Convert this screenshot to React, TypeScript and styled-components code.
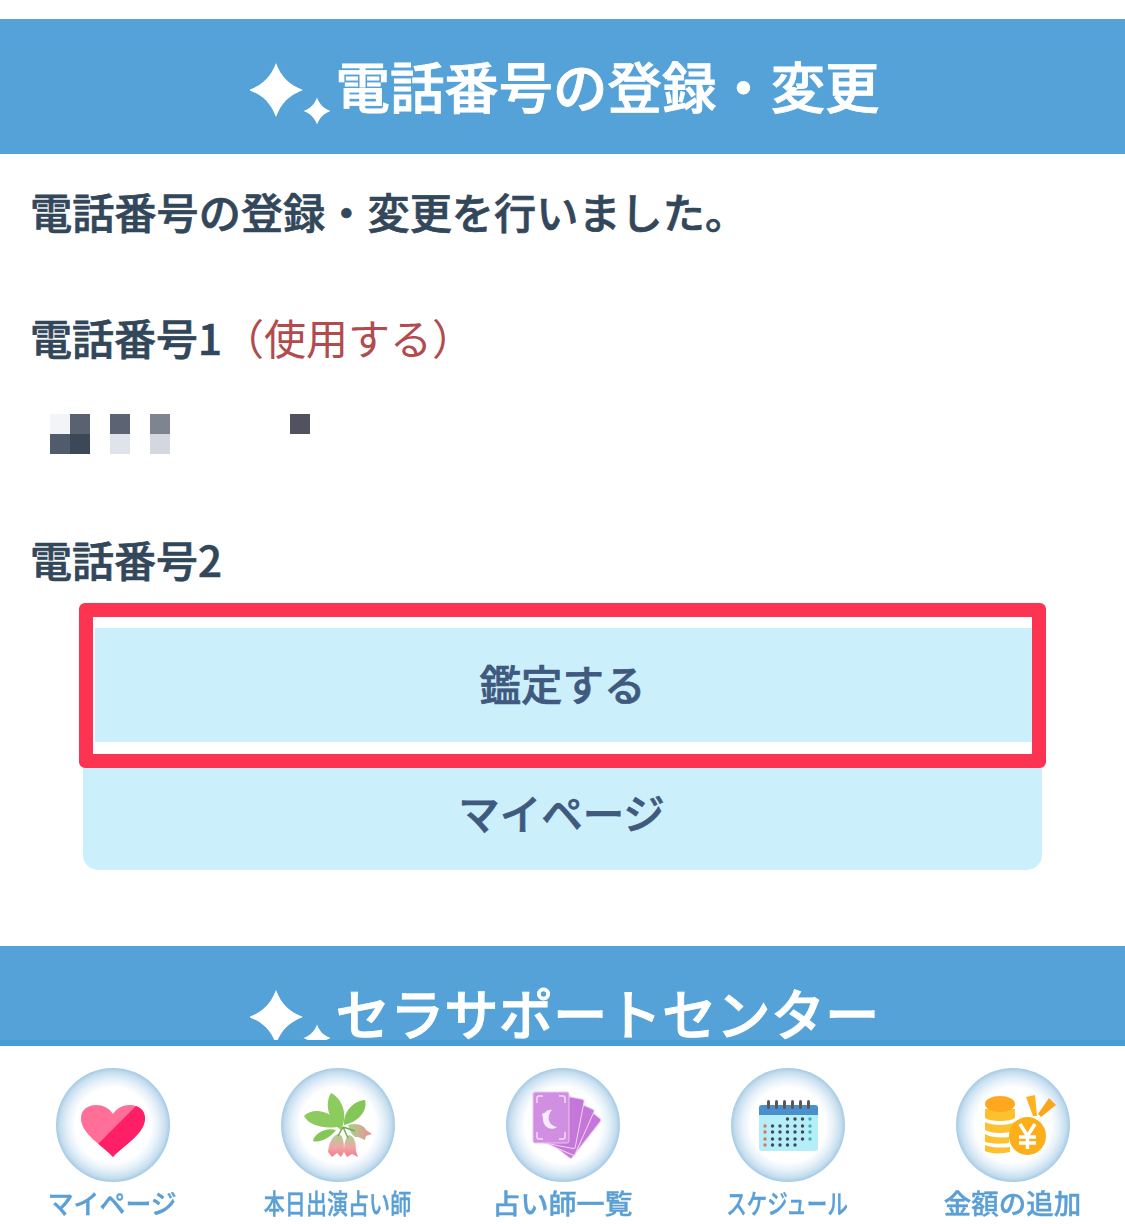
import * as React from "react";
import styled, { createGlobalStyle } from "styled-components";

const GlobalStyle = createGlobalStyle`
  html, body {
    margin: 0;
    padding: 0;
    background: #fff;
    font-family: "Noto Sans CJK JP", "Noto Sans", sans-serif;
  }
  * { box-sizing: border-box; }
`;

const Page = styled.div`
  width: 1125px;
  height: 1224px;
  display: flex;
  flex-direction: column;
  overflow: hidden;
  background: #fff;
`;

const Main = styled.main`
  height: 1040px;
  flex: none;
  overflow: hidden;
  padding-top: 19px;
`;

const Band = styled.section<{ $gap?: number }>`
  height: 135px;
  margin-top: ${p => p.$gap || 0}px;
  padding-left: 4px;
  background: #54a2d8;
  display: flex;
  justify-content: center;
  align-items: center;
  gap: 6px;
`;

const BandTitle = styled.h2`
  margin: 0 0 4px;
  color: #fff;
  font-size: 54.4px;
  font-weight: 500;
  -webkit-text-stroke: 0.9px currentColor;
  line-height: 70px;
  white-space: nowrap;
`;

const SparkleIcon = styled.svg`
  width: 80px;
  height: 61px;
  margin-top: 14px;
  flex: none;
  filter: blur(0.7px);
`;

const Content = styled.div`
  padding: 27px 32px 0 30px;
  color: #33475b;
`;

const Message = styled.p`
  margin: 0;
  font-size: 42.2px;
  font-weight: 500;
  -webkit-text-stroke: 0.7px currentColor;
  line-height: 60px;
  white-space: nowrap;
`;

const PhoneLabel = styled.h3<{ $top: number }>`
  margin: ${p => p.$top}px 0 0;
  font-size: 42px;
  font-weight: 500;
  -webkit-text-stroke: 0.7px currentColor;
  line-height: 60px;
  white-space: nowrap;
`;

const Usage = styled.span`
  color: #b14b4d;
  font-weight: 400;
  -webkit-text-stroke: 0;
`;

const Mosaic = styled.svg`
  display: block;
  width: 320px;
  height: 40px;
  margin-top: 47px;
`;

const Actions = styled.div`
  margin: 14px 51px 0 53px;
`;

const Highlight = styled.div`
  margin: 0 -4px;
  padding: 11px 0 12px 2px;
  border: 14px solid #fd3352;
  border-radius: 6px;
  background: #fff;
`;

const ActionButton = styled.button<{ $last?: boolean }>`
  display: block;
  width: 100%;
  height: ${p => (p.$last ? 102 : 114)}px;
  padding: 0 2px ${p => (p.$last ? 14 : 4)}px 0;
  border: 0;
  border-radius: ${p => (p.$last ? "0 0 15px 15px" : "0")};
  background: #cceffc;
  color: #40597e;
  font-family: inherit;
  font-size: 41.5px;
  font-weight: 500;
  -webkit-text-stroke: 0.7px currentColor;
`;

const TabBar = styled.nav`
  flex: 1;
  display: grid;
  grid-template-columns: repeat(5, 225px);
  border-top: 6px solid #469cd6;
  padding-top: 22px;
  background: #fff;
`;

const Tab = styled.div`
  display: flex;
  flex-direction: column;
  align-items: center;
`;

const Bubble = styled.div`
  width: 114px;
  height: 114px;
  border-radius: 50%;
  background: radial-gradient(circle closest-side, #fff 0%, #fff 66%, #e6f1f9 80%, #c6deef 93%, #a4cae4 100%);
`;

const BubbleArt = styled.svg`
  display: block;
  width: 114px;
  height: 114px;
`;

const TabLabel = styled.span<{ $squeeze?: number }>`
  display: inline-block;
  margin-top: 4px;
  color: #5a9fd5;
  font-size: 27px;
  font-weight: 500;
  -webkit-text-stroke: 0.4px currentColor;
  line-height: 34px;
  white-space: nowrap;
  transform: scaleX(${p => p.$squeeze || 1});
`;

const starPath = (cx: number, cy: number, r: number) => {
  const k = r * 0.2;
  const m = r * 0.48;
  return `M${cx} ${cy - r}C${cx + k} ${cy - m} ${cx + m} ${cy - k} ${cx + r} ${cy}C${cx + m} ${cy + k} ${cx + k} ${cy + m} ${cx} ${cy + r}C${cx - k} ${cy + m} ${cx - m} ${cy + k} ${cx - r} ${cy}C${cx - m} ${cy - k} ${cx - k} ${cy - m} ${cx} ${cy - r}Z`;
};

const Sparkle = () => (
  <SparkleIcon viewBox="0 0 80 61">
    <path d={starPath(26, 27, 27)} fill="#fff" />
    <path d={starPath(67, 48, 13.5)} fill="#fff" />
  </SparkleIcon>
);

const HeartArt = () => (
  <BubbleArt viewBox="0 0 114 114">
    <defs>
      <clipPath id="heart-half">
        <polygon points="82,36 40,78 57,100 100,100 100,30" />
      </clipPath>
    </defs>
    <path
      d="M57 89C45 76 25 66 25 50C25 42 32 37 40 37C47 37 53 40 57 46C61 40 67 37 74 37C82 37 89 42 89 50C89 66 69 76 57 89Z"
      fill="#ff6f98"
    />
    <path
      d="M57 89C45 76 25 66 25 50C25 42 32 37 40 37C47 37 53 40 57 46C61 40 67 37 74 37C82 37 89 42 89 50C89 66 69 76 57 89Z"
      fill="#ff1f66"
      clipPath="url(#heart-half)"
    />
  </BubbleArt>
);

const FlowerArt = () => (
  <BubbleArt viewBox="0 0 114 114">
    <defs>
      <linearGradient id="bell" x1="0" y1="0" x2="0" y2="1">
        <stop offset="0" stopColor="#a5d58c" />
        <stop offset="0.55" stopColor="#f2a6a6" />
        <stop offset="1" stopColor="#ee7f8f" />
      </linearGradient>
      <linearGradient id="bell-side" x1="0" y1="0" x2="1" y2="0">
        <stop offset="0" stopColor="#a5d58c" />
        <stop offset="1" stopColor="#ee8f97" />
      </linearGradient>
    </defs>
    <path d="M60 62C50 55 42 38 50 25C60 30 68 45 60 62Z" fill="#8ccb5e" />
    <path d="M63 57C62 44 72 33 84 32C87 43 77 54 63 57Z" fill="#84c658" />
    <path d="M60 58C46 62 28 58 23 48C32 39 50 42 60 58Z" fill="#8ccb5e" />
    <path d="M55 62C48 71 38 75 32 73C33 66 44 59 55 62Z" fill="#84c658" />
    <path d="M67 57C76 54 84 58 85 62L91 66L85 68L84 72L77 69C73 70 69 65 67 57Z" fill="url(#bell-side)" />
    <path d="M57 66C63 67 63 76 63 84L60 89L56 85L51 89L47 84C48 75 51 68 57 66Z" fill="url(#bell)" />
    <path d="M68 67C74 68 75 76 75 83L77 89L71 86L66 89L63 84C63 77 64 70 68 67Z" fill="url(#bell)" />
    <path d="M62 59L57 68M62 59L67 70M62 59L74 63" stroke="#6fb04a" strokeWidth="1.5" fill="none" />
  </BubbleArt>
);

const CardsArt = () => (
  <BubbleArt viewBox="0 0 114 114">
    <g fill="#c477d8" stroke="#f1d3f5" strokeWidth="1">
      <rect x="50" y="36" width="34" height="50" rx="2" transform="rotate(38 67 61)" />
      <rect x="46" y="33" width="34" height="50" rx="2" transform="rotate(24 63 58)" />
      <rect x="40" y="28" width="34" height="50" rx="2" transform="rotate(11 57 53)" />
    </g>
    <rect x="27" y="24" width="36" height="51" rx="2" fill="#d18fe2" stroke="#eac4f2" strokeWidth="1" />
    <path
      d="M31 35V30Q31 28 33 28H37M59 35V30Q59 28 57 28H53M31 64V69Q31 71 33 71H37M59 64V69Q59 71 57 71H53"
      stroke="#f3dcf7"
      strokeWidth="1.5"
      fill="none"
    />
    <path d="M46 42C41 47 41 57 51 59C46 63 38 60 37 52C36 46 41 41 46 42Z" fill="#f8eafb" />
    <circle cx="38" cy="47" r="2" fill="#f8eafb" />
  </BubbleArt>
);

const CalendarArt = () => {
  const rows = [51, 58, 64, 71, 77];
  const cols = [34, 41.5, 49, 56.5, 64, 71.5, 79];
  return (
    <BubbleArt viewBox="0 0 114 114">
      <rect x="28" y="37" width="59" height="46" rx="3" fill="#b5eef8" />
      <path d="M28 47V40Q28 37 31 37H84Q87 37 87 40V47Z" fill="#4a90cc" />
      {[36, 44, 52, 60, 68, 76].map(x => (
        <rect key={x} x={x} y="32" width="3" height="9" rx="1.5" fill="#5a5560" />
      ))}
      {rows.map((y, r) =>
        cols.map((x, c) => {
          const hidden = (r === 0 && c < 3) || (r === 4 && c > 4);
          if (hidden) return null;
          const fill = c === 0 ? "#d9745f" : c === 6 ? "#35b5b5" : "#3c4a55";
          return <circle key={`${r}-${c}`} cx={x} cy={y} r="1.7" fill={fill} />;
        })
      )}
    </BubbleArt>
  );
};

const CoinsArt = () => (
  <BubbleArt viewBox="0 0 114 114">
    <g fill="#fdc02f">
      <path d="M29 41H59V50C55 54 33 54 29 50Z" />
      <path d="M29 54C36 58 52 58 59 54V62C52 66 36 66 29 62Z" />
      <path d="M29 66C36 70 46 70 53 69V75C46 76 36 76 29 74Z" />
      <path d="M29 77C36 80 46 80 54 79V84C46 86 34 86 29 83Z" />
    </g>
    <ellipse cx="44" cy="36" rx="15" ry="8" fill="#ffa81f" />
    <polygon points="70,29 79,27 81,48 77,48" fill="#fdb21e" />
    <polygon points="93,30 100,37 85,49 82,46" fill="#fba51c" />
    <ellipse cx="71.5" cy="68" rx="18.5" ry="19" fill="#fbaf1a" />
    <path
      d="M64 56L71.5 68L79 56M71.5 68V81M63 69H80M63 75H80"
      stroke="#fff"
      strokeWidth="3.5"
      fill="none"
    />
  </BubbleArt>
);

const mosaicCells = [
  { x: 20, y: 0, fill: "#f3f4f7" },
  { x: 40, y: 0, fill: "#5a6170" },
  { x: 20, y: 20, fill: "#505c6b" },
  { x: 40, y: 20, fill: "#3c4858" },
  { x: 80, y: 0, fill: "#5c6474" },
  { x: 80, y: 20, fill: "#dfe4ec" },
  { x: 120, y: 0, fill: "#7e8490" },
  { x: 120, y: 20, fill: "#d3d8df" },
  { x: 260, y: 0, fill: "#50535f" }
];

const tabs = [
  { label: "マイページ", art: <HeartArt />, squeeze: 0.96 },
  { label: "本日出演占い師", art: <FlowerArt />, squeeze: 0.78 },
  { label: "占い師一覧", art: <CardsArt />, squeeze: 1.04 },
  { label: "スケジュール", art: <CalendarArt />, squeeze: 0.76 },
  { label: "金額の追加", art: <CoinsArt />, squeeze: 1.02 }
];

export default function App() {
  return (
    <Page>
      <GlobalStyle />
      <Main>
        <Band>
          <Sparkle />
          <BandTitle>電話番号の登録・変更</BandTitle>
        </Band>
        <Content>
          <Message>電話番号の登録・変更を行いました。</Message>
          <PhoneLabel $top={66}>
            電話番号1<Usage>（使用する）</Usage>
          </PhoneLabel>
          <Mosaic viewBox="0 0 320 40">
            {mosaicCells.map((c, idx) => (
              <rect key={idx} x={c.x} y={c.y} width="20" height="20" fill={c.fill} />
            ))}
          </Mosaic>
          <PhoneLabel $top={75}>電話番号2</PhoneLabel>
          <Actions>
            <Highlight>
              <ActionButton>鑑定する</ActionButton>
            </Highlight>
            <ActionButton $last>マイページ</ActionButton>
          </Actions>
        </Content>
        <Band $gap={76}>
          <Sparkle />
          <BandTitle>セラサポートセンター</BandTitle>
        </Band>
      </Main>
      <TabBar>
        {tabs.map(tab => (
          <Tab key={tab.label}>
            <Bubble>{tab.art}</Bubble>
            <TabLabel $squeeze={tab.squeeze}>{tab.label}</TabLabel>
          </Tab>
        ))}
      </TabBar>
    </Page>
  );
}
